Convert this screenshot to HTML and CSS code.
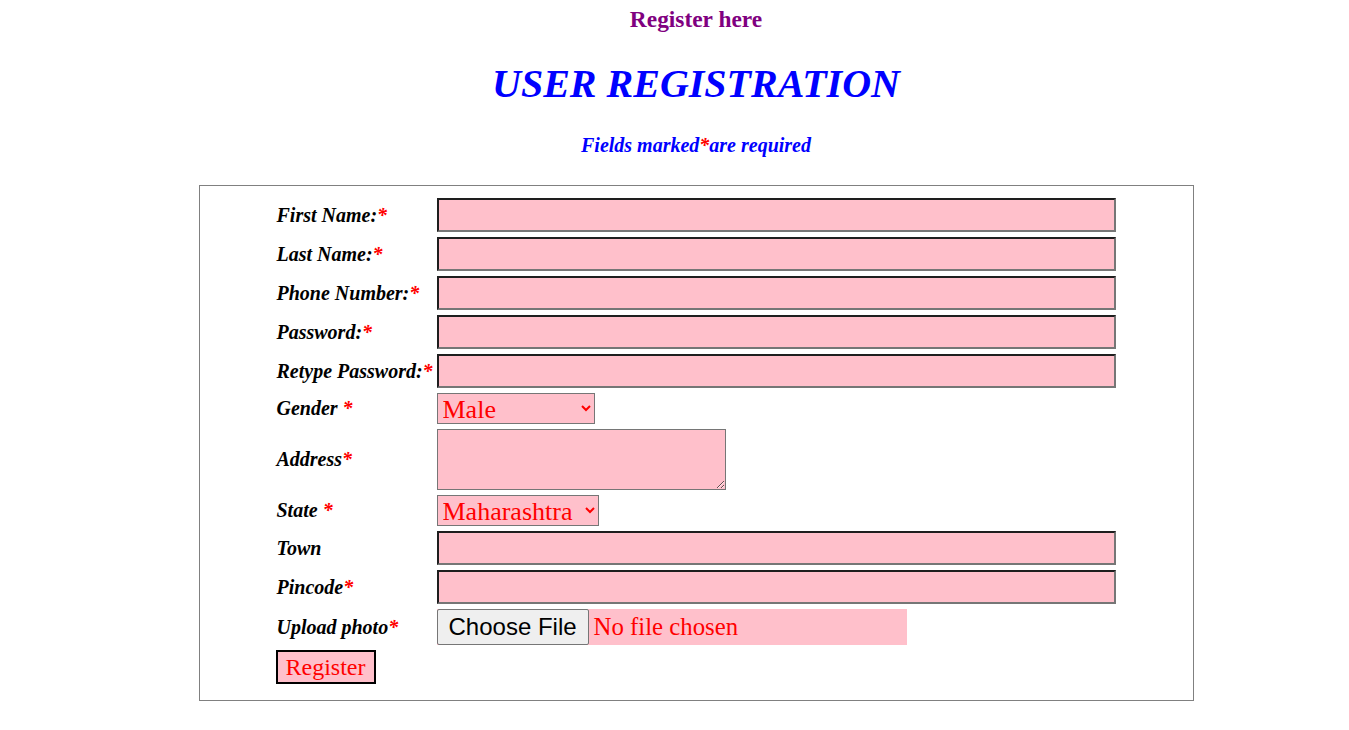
FILE: index.html
```html
<!DOCTYPE html>
<html>
<head>
<meta charset="utf-8">
<title>User Registration</title>
<link rel="stylesheet" href="styles.css">
</head>
<body>
<div class="page">
  <h3 class="top-link">Register here</h3>
  <h1 class="title">USER REGISTRATION</h1>
  <p class="note">Fields marked<span class="req">*</span>are required</p>
  <div class="box">
    <form class="form">
      <label class="lbl">First Name:<span class="req">*</span></label>
      <input class="txt" type="text">
      <label class="lbl">Last Name:<span class="req">*</span></label>
      <input class="txt" type="text">
      <label class="lbl">Phone Number:<span class="req">*</span></label>
      <input class="txt" type="text">
      <label class="lbl">Password:<span class="req">*</span></label>
      <input class="txt" type="password">
      <label class="lbl">Retype Password:<span class="req">*</span></label>
      <input class="txt" type="password">
      <label class="lbl">Gender <span class="req">*</span></label>
      <div><select class="sel sel-gender"><option>Male</option><option>Female</option></select></div>
      <label class="lbl">Address<span class="req">*</span></label>
      <div><textarea class="area"></textarea></div>
      <label class="lbl">State <span class="req">*</span></label>
      <div><select class="sel sel-state"><option>Maharashtra</option><option>Gujarat</option></select></div>
      <label class="lbl">Town</label>
      <input class="txt" type="text">
      <label class="lbl">Pincode<span class="req">*</span></label>
      <input class="txt" type="text">
      <label class="lbl">Upload photo<span class="req">*</span></label>
      <div><input class="file" type="file"></div>
      <div class="submit-row"><button class="btn" type="button">Register</button></div>
    </form>
  </div>
</div>
</body>
</html>
```
FILE: styles.css
```css
html, body {
  margin: 0;
  padding: 0;
  background: #fff;
}
body {
  font-family: "Liberation Serif", "Times New Roman", serif;
}
.page {
  margin: 0 8px 0 51px;
  display: flex;
  flex-direction: column;
  align-items: center;
}
.top-link {
  margin: 6px 0 0;
  font-size: 23.4px;
  line-height: 26px;
  font-weight: bold;
  color: #800080;
}
.title {
  margin: 30px 0 0;
  font-size: 40px;
  line-height: 44px;
  font-weight: bold;
  font-style: italic;
  color: #0000ff;
}
.note {
  margin: 27px 0 0;
  font-size: 20px;
  line-height: 24px;
  font-weight: bold;
  font-style: italic;
  color: #0000ff;
}
.req {
  color: #ff0000;
}
.box {
  margin-top: 28px;
  width: 995px;
  box-sizing: border-box;
  border: 1px solid #808080;
  padding: 12px 0 16px;
}
.form {
  width: 839px;
  margin: 0 auto;
  display: grid;
  grid-template-columns: 160px 679px;
  row-gap: 5px;
  align-items: center;
}
.lbl {
  font-size: 20px;
  font-weight: bold;
  font-style: italic;
  color: #000;
  white-space: nowrap;
}
.txt {
  display: block;
  box-sizing: border-box;
  width: 679px;
  height: 34px;
  margin: 0;
  padding: 1px 2px;
  border-width: 2px;
  border-style: solid;
  border-top-color: #1e1e1e;
  border-left-color: #1e1e1e;
  border-right-color: #767676;
  border-bottom-color: #767676;
  background: #ffc0cb;
  color: #ff0000;
  font-family: "Liberation Serif", serif;
  font-size: 24px;
}
.sel {
  display: block;
  box-sizing: border-box;
  height: 31px;
  margin: 0;
  padding: 0 1px;
  border: 1px solid #767676;
  border-radius: 0;
  background-color: #ffc0cb;
  color: #ff0000;
  font-family: "Liberation Serif", serif;
  font-size: 26px;
}
.sel-gender {
  width: 158px;
}
.sel-state {
  width: 162px;
}
.area {
  display: block;
  box-sizing: border-box;
  width: 289px;
  height: 61px;
  margin: 0;
  border: 1px solid #767676;
  background: #ffc0cb;
  color: #ff0000;
  font-family: "Liberation Serif", serif;
  font-size: 24px;
}
.file {
  display: block;
  box-sizing: border-box;
  width: 470px;
  height: 36px;
  margin: 0;
  padding: 0;
  background: #ffc0cb;
  color: #ff0000;
  font-family: "Liberation Serif", serif;
  font-size: 24.8px;
}
.file::file-selector-button {
  height: 36px;
  margin: 0 5px 0 0;
  padding: 0 11px;
  border: 1px solid #767676;
  border-radius: 2px;
  background: #efefef;
  color: #000;
  font-family: "Liberation Sans", Arial, sans-serif;
  font-size: 24px;
}
.submit-row {
  grid-column: 1 / 3;
}
.btn {
  display: block;
  box-sizing: border-box;
  width: 100px;
  height: 34px;
  margin: 0 0 0 -1px;
  padding: 0;
  border: 2px solid #000;
  background: #ffc0cb;
  color: #ff0000;
  font-family: "Liberation Serif", serif;
  font-size: 24px;
}
```
